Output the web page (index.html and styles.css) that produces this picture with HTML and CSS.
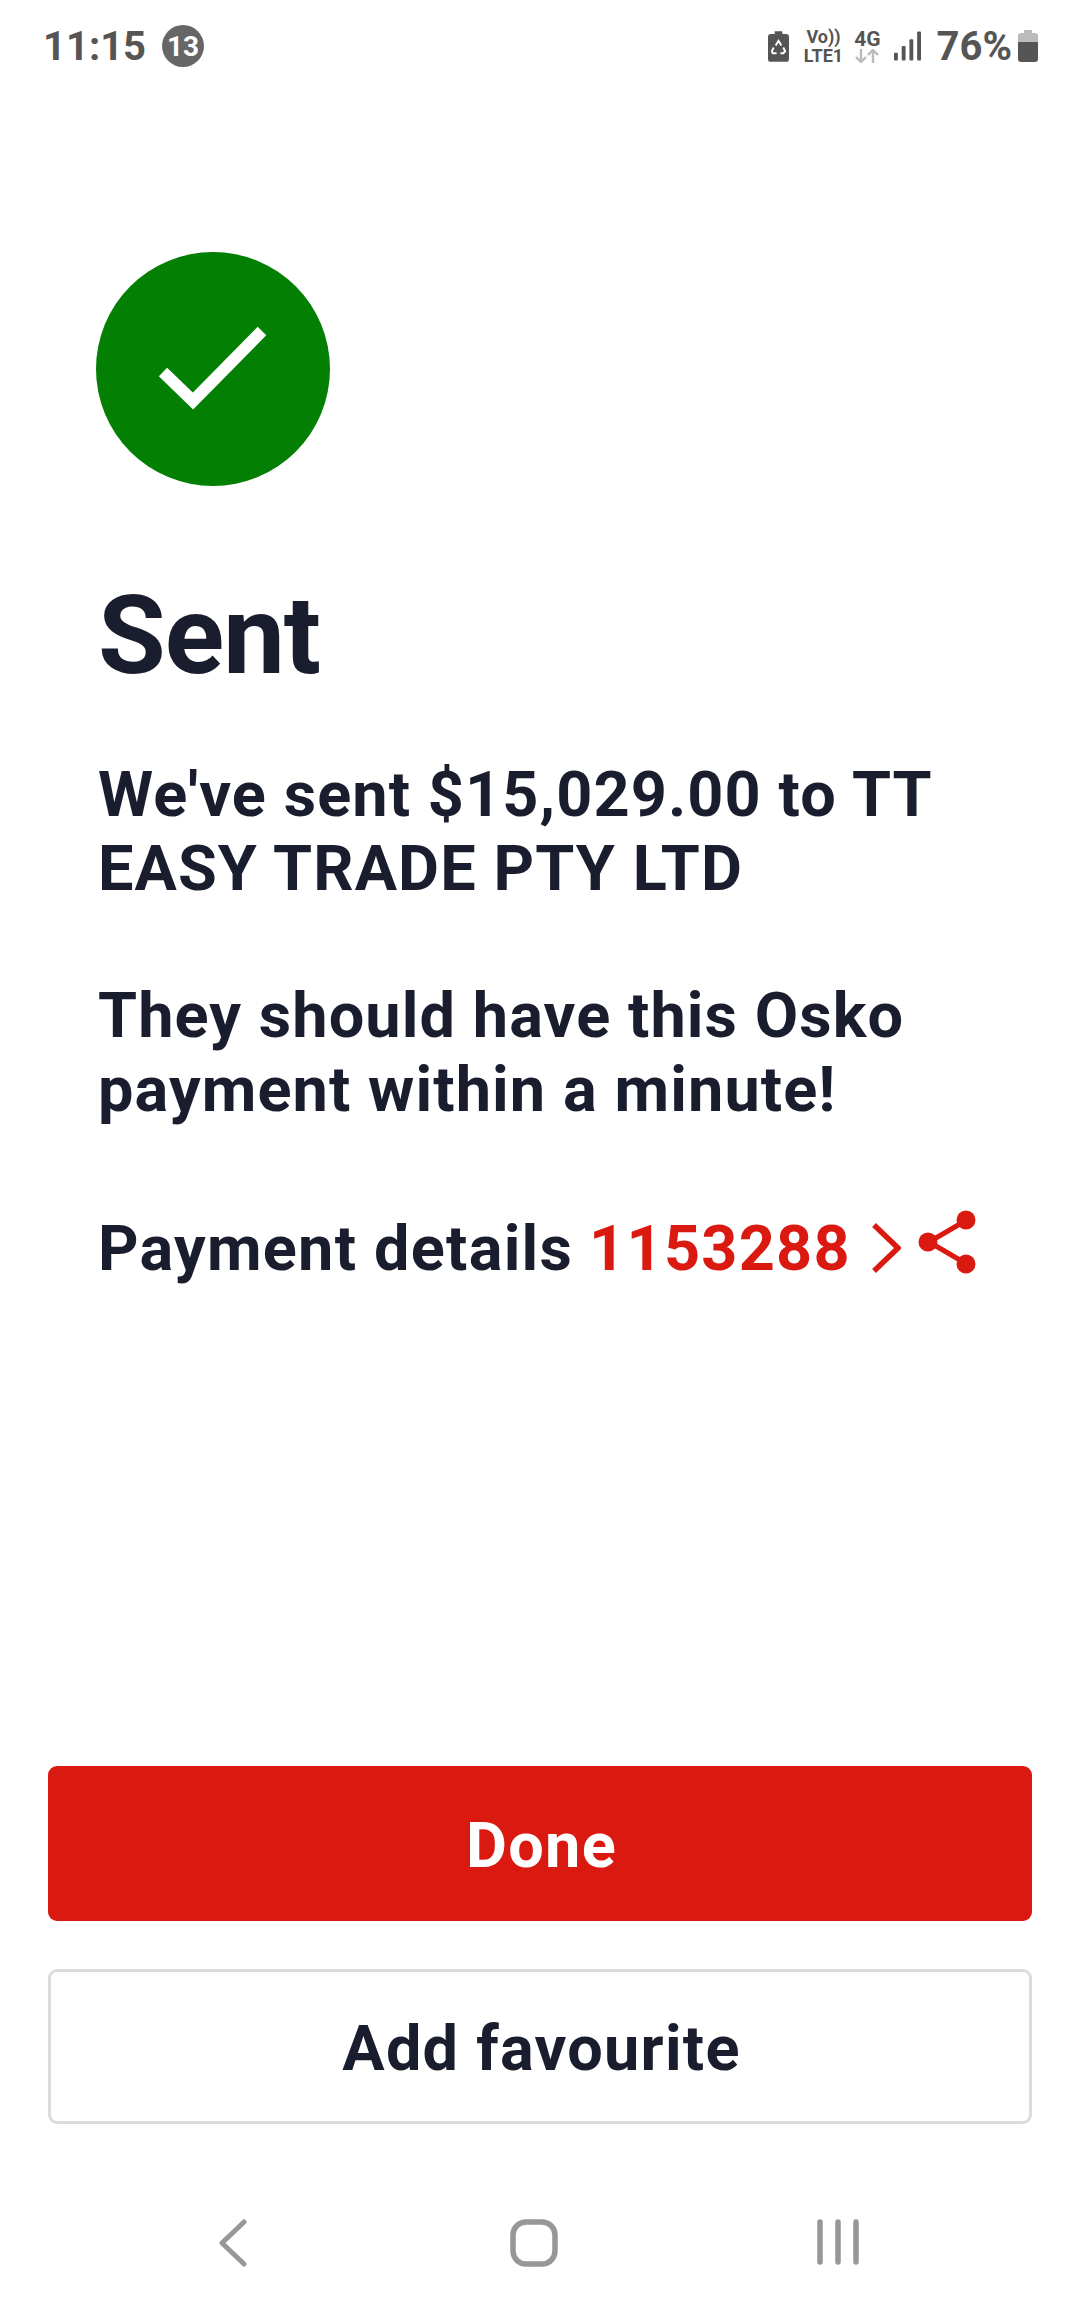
FILE: index.html
```html
<!DOCTYPE html>
<html lang="en">
<head>
  <meta charset="UTF-8" />
  <meta name="viewport" content="width=device-width, initial-scale=1.0" />
  <title>Payment sent</title>
  <link rel="stylesheet" href="styles.css">
</head>
<body>
  <!-- Phone status bar -->
  <div class="status-bar">
    <div class="status-left">
      <span class="clock">11:15</span>
      <span class="notif-count">13</span>
    </div>
    <div class="status-right">
      <svg class="battery-saver" width="21" height="31" viewBox="0 0 22 32">
        <path d="M7 0h8v3h4a3 3 0 0 1 3 3v23a3 3 0 0 1-3 3H3a3 3 0 0 1-3-3V6a3 3 0 0 1 3-3h4z" fill="#555"/>
        <path d="M8 15l3-5 3 5M16 17l2 4-2 2h-3M9 23H5l-1-2 2-4" fill="none" stroke="#fff" stroke-width="2"/>
      </svg>
      <div class="volte">
        <span>Vo))</span>
        <span>LTE1</span>
      </div>
      <div class="net">
        <span>4G</span>
        <svg width="24" height="14" viewBox="0 0 24 14">
          <path d="M6 0v13M1 8l5 5 5-5" fill="none" stroke="#bbb" stroke-width="2.4"/>
          <path d="M18 14V1M13 6l5-5 5 5" fill="none" stroke="#bbb" stroke-width="2.4"/>
        </svg>
      </div>
      <svg class="signal" width="27" height="30" viewBox="0 0 28 30">
        <rect x="0" y="22" width="4" height="8" rx="1" fill="#555"/>
        <rect x="8" y="15" width="4" height="15" rx="1" fill="#555"/>
        <rect x="16" y="8" width="4" height="22" rx="1" fill="#555"/>
        <rect x="24" y="0" width="4" height="30" rx="1" fill="#555"/>
      </svg>
      <span class="percent">76%</span>
      <svg class="battery" width="20" height="32" viewBox="0 0 20 32">
        <path d="M6 0h8v3h3a3 3 0 0 1 3 3v6H0V6a3 3 0 0 1 3-3h3z" fill="#bbb"/>
        <path d="M0 12h20v17a3 3 0 0 1-3 3H3a3 3 0 0 1-3-3z" fill="#555"/>
      </svg>
    </div>
  </div>

  <!-- Confirmation message -->
  <div class="content">
    <svg class="tick" width="234" height="234" viewBox="0 0 234 234">
      <circle cx="117" cy="117" r="117" fill="#037f03"/>
      <path d="M67 120l30 29 69-70" fill="none" stroke="#fff" stroke-width="12"/>
    </svg>
    <h1 class="title">Sent</h1>
    <p class="msg">We've sent $15,029.00 to TT EASY TRADE PTY LTD</p>
    <p class="msg">They should have this Osko payment within a minute!</p>
    <div class="details">
      <span>Payment details</span>
      <span class="ref">1153288</span>
      <svg class="chevron" width="30" height="50" viewBox="0 0 30 50">
        <path d="M3 2l24 23L3 48" fill="none" stroke="#da1a11" stroke-width="5.5"/>
      </svg>
      <svg class="share" width="60" height="64" viewBox="0 0 60 64">
        <path d="M48 11L12 32l36 21" fill="none" stroke="#da1a11" stroke-width="5"/>
        <circle cx="49" cy="10" r="9.5" fill="#da1a11"/>
        <circle cx="11" cy="32" r="9.5" fill="#da1a11"/>
        <circle cx="49" cy="54" r="9.5" fill="#da1a11"/>
      </svg>
    </div>
  </div>

  <!-- Actions -->
  <div class="actions">
    <button class="btn btn-primary">Done</button>
    <button class="btn btn-outline">Add favourite</button>
  </div>

  <!-- Android navigation bar -->
  <div class="nav-bar">
    <svg width="30" height="48" viewBox="0 0 30 48">
      <path d="M26 3L4 24l22 21" fill="none" stroke="#979797" stroke-width="5" stroke-linecap="round" stroke-linejoin="round"/>
    </svg>
    <svg class="nav-home" width="48" height="48" viewBox="0 0 48 48">
      <rect x="3" y="3" width="42" height="42" rx="13" fill="none" stroke="#979797" stroke-width="5.5"/>
    </svg>
    <svg width="44" height="46" viewBox="0 0 44 46">
      <path d="M4 3v40M22 3v40M40 3v40" fill="none" stroke="#979797" stroke-width="5.5" stroke-linecap="round"/>
    </svg>
  </div>
</body>
</html>
```

FILE: styles.css
```css
/* Page */
body {
  margin: 0;
  width: 1080px;
  height: 2316px;
  background-color: #fff;
  font-family: Roboto, "Liberation Sans", sans-serif;
  color: #1a1d2d;
  display: flex;
  flex-direction: column;
  overflow: hidden;
}
/* Status bar */
.status-bar {
  height: 92px;
  display: flex;
  justify-content: space-between;
  align-items: center;
  padding: 0 42px 0 43px;
  color: #555;
}
.status-left {
  display: flex;
  align-items: center;
  gap: 16px;
}
.clock {
  font-size: 40px;
  font-weight: 700;
}
.notif-count {
  width: 42px;
  height: 42px;
  border-radius: 50%;
  background-color: #666;
  color: #fff;
  font-size: 28px;
  font-weight: 700;
  display: flex;
  align-items: center;
  justify-content: center;
}
.status-right {
  display: flex;
  align-items: center;
}
.battery-saver {
  margin-right: 15px;
}
.volte {
  display: flex;
  flex-direction: column;
  align-items: center;
  font-size: 18px;
  font-weight: 700;
  line-height: 19px;
  margin-right: 11px;
}
.net {
  display: flex;
  flex-direction: column;
  align-items: center;
  font-size: 21px;
  font-weight: 700;
  line-height: 20px;
  margin-right: 13px;
}
.signal {
  margin-right: 16px;
}
.percent {
  font-size: 40px;
  font-weight: 700;
}
.battery {
  margin-left: 6px;
}
/* Confirmation message */
.content {
  flex: 1;
  padding: 160px 48px 0 98px;
}
.tick {
  display: block;
  margin-left: -2px;
}
.title {
  margin: 90px 0 62px;
  font-size: 110px;
  line-height: 120px;
  font-weight: 700;
  letter-spacing: -1px;
}
.msg {
  margin: 0 0 74px;
  font-size: 63px;
  line-height: 73.5px;
  font-weight: 700;
  letter-spacing: 1.1px;
}
.details {
  display: flex;
  align-items: center;
  height: 96px;
  font-size: 63px;
  font-weight: 700;
  letter-spacing: 1.25px;
}
.ref {
  color: #da1a11;
  margin-left: 16px;
}
.chevron {
  margin-left: 20px;
}
.share {
  margin-left: 16px;
  margin-bottom: 12px;
}
/* Buttons */
.actions {
  padding: 0 48px;
  display: flex;
  flex-direction: column;
  gap: 48px;
}
.btn {
  height: 155px;
  padding: 4px 0 0 3px;
  border-radius: 9px;
  font-family: inherit;
  font-size: 63px;
  font-weight: 700;
  letter-spacing: 1.25px;
}
.btn-primary {
  background-color: #da1a11;
  color: #fff;
  border: none;
}
.btn-outline {
  background-color: #fff;
  color: #1a1d2d;
  border: 3px solid #dcdcde;
}
/* Navigation bar */
.nav-bar {
  box-sizing: border-box;
  height: 192px;
  display: flex;
  justify-content: space-between;
  align-items: flex-start;
  padding: 95px 220px 0 218px;
}
.nav-home {
  margin-left: 3px;
}
```
